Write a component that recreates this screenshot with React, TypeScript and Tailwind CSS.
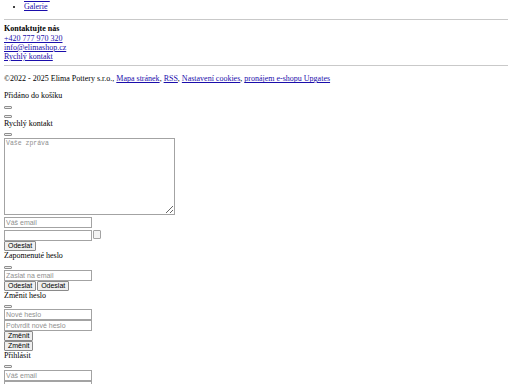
const link = "text-[#1a0dab] underline";
const input =
  "block w-[88px] h-[11px] border border-[#a3a3a3] px-[1px] bg-white text-[7px] font-['Liberation_Sans',Arial,sans-serif] text-black placeholder:text-[#8f8f8f] outline-none";
const btn =
  "h-[10px] border border-[#8a8a8a] bg-[#efefef] rounded-[1px] px-[3px] text-[7px] leading-[8px] font-['Liberation_Sans',Arial,sans-serif] text-black";
const tiny =
  "inline-block w-[8px] h-[3px] border border-[#8f8f8f] bg-[#efefef] rounded-[1px] align-baseline";

export default function App() {
  return (
    <div className="w-[512px] h-[384px] overflow-hidden bg-white px-[4px] font-['Liberation_Serif','Times_New_Roman',serif] text-[8px] leading-[9.2px] text-black">
      <ul className="list-disc pl-[20px] mt-[-7px] mb-[8px]">
        <li>
          <a className={link}>Kontakt</a>
        </li>
        <li>
          <a className={link}>Galerie</a>
        </li>
      </ul>
      <hr className="my-[4px] border-t border-[#c9c9c9]" />
      <div className="font-bold mt-[1px]">Kontaktujte nás</div>
      <div>
        <a className={link}>+420 777 970 320</a>
      </div>
      <div>
        <a className={link}>info@elimashop.cz</a>
      </div>
      <div>
        <a className={link}>Rychlý kontakt</a>
      </div>
      <hr className="my-[4px] border-t border-[#c9c9c9]" />
      <p className="my-[8px]">
        ©2022 - 2025 Elima Pottery s.r.o., <a className={link}>Mapa stránek</a>,{" "}
        <a className={link}>RSS</a>, <a className={link}>Nastavení cookies</a>,{" "}
        <a className={link}>pronájem e-shopu Upgates</a>
      </p>
      <div>Přidáno do košíku</div>
      <div>
        <button className={tiny} />
      </div>
      <div>
        <button className={tiny} />
      </div>
      <div>Rychlý kontakt</div>
      <div>
        <button className={tiny} />
      </div>
      <textarea
        placeholder="Vaše zpráva"
        className="block mt-[1px] w-[171px] h-[77px] border border-[#a3a3a3] p-[1px] bg-white text-[6.5px] leading-[8px] font-['Liberation_Mono','Courier_New',monospace] placeholder:text-[#8f8f8f] outline-none"
      />
      <input placeholder="Váš email" className={input + " mt-[2px]"} />
      <div className="flex items-start mt-[2px]">
        <input className={input} />
        <span className="ml-[1px] w-[8px] h-[9px] border border-[#a3a3a3] bg-[#f3f3f3] rounded-[1px]" />
      </div>
      <button className={btn}>Odeslat</button>
      <div>Zapomenuté heslo</div>
      <div>
        <button className={tiny} />
      </div>
      <input placeholder="Zaslat na email" className={input} />
      <div className="flex gap-[1px]">
        <button className={btn}>Odeslat</button>
        <button className={btn}>Odeslat</button>
      </div>
      <div>Změnit heslo</div>
      <div>
        <button className={tiny} />
      </div>
      <input placeholder="Nové heslo" className={input} />
      <input placeholder="Potvrdit nové heslo" className={input} />
      <button className={btn + " block"}>Změnit</button>
      <button className={btn + " block"}>Změnit</button>
      <div>Přihlásit</div>
      <div>
        <button className={tiny} />
      </div>
      <input placeholder="Váš email" className={input} />
      <input placeholder="Vaše heslo" className={input} />
    </div>
  );
}
